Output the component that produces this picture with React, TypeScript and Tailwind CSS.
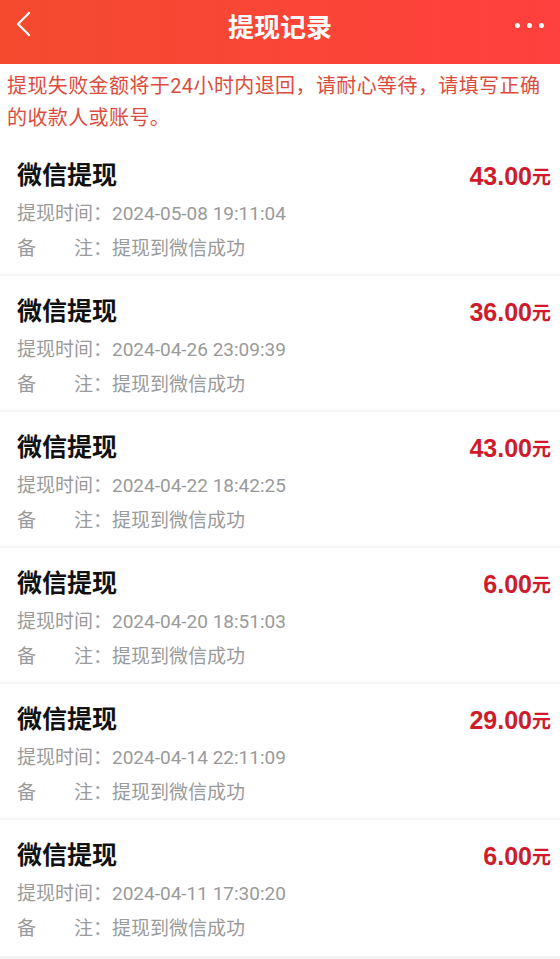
import React from "react";

const items = [
  { amount: "43.00", time: "2024-05-08 19:11:04" },
  { amount: "36.00", time: "2024-04-26 23:09:39" },
  { amount: "43.00", time: "2024-04-22 18:42:25" },
  { amount: "6.00", time: "2024-04-20 18:51:03" },
  { amount: "29.00", time: "2024-04-14 22:11:09" },
  { amount: "6.00", time: "2024-04-11 17:30:20" },
];

const font = { fontFamily: '"Roboto", "Noto Sans CJK SC", sans-serif' };

export default function App() {
  return (
    <div className="min-h-[959px] w-[560px] bg-[#f3f3f6]" style={font}>
      <div className="relative flex h-[64px] items-center justify-center bg-gradient-to-r from-[#f44a2e] to-[#ff403e] pb-[8px]">
        <svg className="absolute left-[14px] top-[10px]" width="20" height="30" viewBox="0 0 20 30">
          <path d="M15 3 L4 14 L15 25" fill="none" stroke="#fff" strokeWidth="2.2" strokeLinecap="round" strokeLinejoin="round" />
        </svg>
        <div className="text-[26px] font-bold leading-none text-white">提现记录</div>
        <div className="absolute right-[16px] top-[23px] flex gap-[7px]">
          <span className="h-[5px] w-[5px] rounded-full bg-white" />
          <span className="h-[5px] w-[5px] rounded-full bg-white" />
          <span className="h-[5px] w-[5px] rounded-full bg-white" />
        </div>
      </div>
      <div className="bg-white pb-[6px] pl-[7px] pr-[4px] pt-[6px] text-[20px] leading-[32px] tracking-[0.4px] text-[#dc4c3e]">
        <div className="h-[32px] overflow-hidden whitespace-nowrap">提现失败金额将于24小时内退回，请耐心等待，请填写正确</div>
        <div className="h-[32px] overflow-hidden whitespace-nowrap">的收款人或账号。</div>
      </div>
      {items.map((it, i) => (
        <div
          key={i}
          className={`h-[136px] overflow-hidden bg-white px-[17px] pt-[18px] ${i < items.length - 1 ? "border-b-2 border-[#f4f4f6]" : "border-b-2 border-white"}`}
        >
          <div className="flex h-[36px] items-center justify-between">
            <div className="text-[25px] font-bold leading-[36px] text-[#111]">微信提现</div>
            <div className="-mr-[8px] flex h-[36px] items-center font-bold text-[#cf1b2b]">
              <span className="text-[25px] leading-[36px]" style={{ fontFamily: '"Liberation Sans", Arial, sans-serif' }}>{it.amount}</span>
              <span className="mt-[3px] text-[19px] leading-[36px]">元</span>
            </div>
          </div>
          <div className="mt-[2px] flex h-[36px] items-center text-[19px] leading-[36px] text-[#9a9a9a]">
            <span>提现时间：</span>
            <span>{it.time}</span>
          </div>
          <div className="flex h-[34px] items-center text-[19px] leading-[34px] text-[#9a9a9a]">
            <span className="flex w-[76px] justify-between">
              <span>备</span>
              <span>注</span>
            </span>
            <span>：</span>
            <span>提现到微信成功</span>
          </div>
        </div>
      ))}
    </div>
  );
}
